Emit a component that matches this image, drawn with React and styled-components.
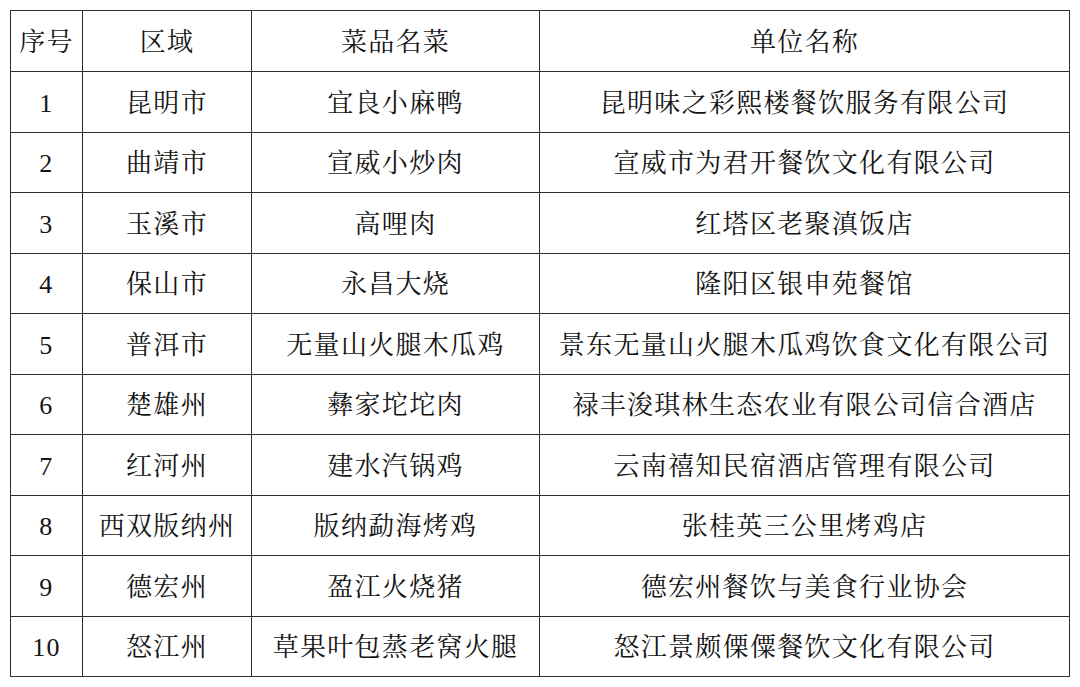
import React from "react";
import styled, { createGlobalStyle } from "styled-components";

const Global = createGlobalStyle`
  html, body { margin: 0; padding: 0; background: #ffffff; }
  body { font-family: "Liberation Serif", "Noto Serif CJK SC", "Noto Sans CJK SC", serif; }
`;

const Page = styled.div`
  padding: 10px 12px 10px 10px;
  width: 1080px;
  box-sizing: border-box;
`;

const Table = styled.table`
  width: 1059px;
  border-collapse: collapse;
  table-layout: fixed;
  color: #141414;
`;

const Col = styled.col`
  width: ${(p) => p.$w}px;
`;

const Row = styled.tr`
  height: ${(p) => (p.$head ? 61 : 60.5)}px;
`;

const Cell = styled.td`
  border: 1.6px solid #2e2e2e;
  text-align: center;
  vertical-align: middle;
  padding: 4px 0 0 0;
  font-size: 26px;
  line-height: 1;
  letter-spacing: 1.3px;
  white-space: nowrap;
  font-weight: 400;
`;

const HeadCell = styled(Cell).attrs({ as: "th" })`
  font-weight: 400;
`;

const rows = [
  ["1", "昆明市", "宜良小麻鸭", "昆明味之彩熙楼餐饮服务有限公司"],
  ["2", "曲靖市", "宣威小炒肉", "宣威市为君开餐饮文化有限公司"],
  ["3", "玉溪市", "高哩肉", "红塔区老聚滇饭店"],
  ["4", "保山市", "永昌大烧", "隆阳区银申苑餐馆"],
  ["5", "普洱市", "无量山火腿木瓜鸡", "景东无量山火腿木瓜鸡饮食文化有限公司"],
  ["6", "楚雄州", "彝家坨坨肉", "禄丰浚琪林生态农业有限公司信合酒店"],
  ["7", "红河州", "建水汽锅鸡", "云南禧知民宿酒店管理有限公司"],
  ["8", "西双版纳州", "版纳勐海烤鸡", "张桂英三公里烤鸡店"],
  ["9", "德宏州", "盈江火烧猪", "德宏州餐饮与美食行业协会"],
  ["10", "怒江州", "草果叶包蒸老窝火腿", "怒江景颇傈僳餐饮文化有限公司"],
];

export default function App() {
  return (
    <Page>
      <Global />
      <Table>
        <colgroup>
          <Col $w={72} />
          <Col $w={169} />
          <Col $w={288} />
          <Col $w={530} />
        </colgroup>
        <thead>
          <Row $head>
            <HeadCell>序号</HeadCell>
            <HeadCell>区域</HeadCell>
            <HeadCell>菜品名菜</HeadCell>
            <HeadCell>单位名称</HeadCell>
          </Row>
        </thead>
        <tbody>
          {rows.map((r) => (
            <Row key={r[0]}>
              <Cell>{r[0]}</Cell>
              <Cell>{r[1]}</Cell>
              <Cell>{r[2]}</Cell>
              <Cell>{r[3]}</Cell>
            </Row>
          ))}
        </tbody>
      </Table>
    </Page>
  );
}
